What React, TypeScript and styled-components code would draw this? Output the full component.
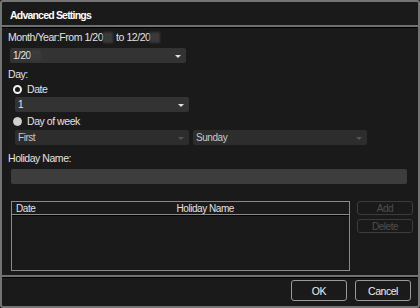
import styled, { createGlobalStyle } from 'styled-components';

const GlobalStyle = createGlobalStyle`
  html, body {
    margin: 0;
    padding: 0;
    background: #1a1a1a;
  }
  * {
    box-sizing: border-box;
  }
`;

const Dialog = styled.div`
  width: 420px;
  height: 308px;
  border: 2px solid #747474;
  border-radius: 3px;
  background: #1a1a1a;
  display: flex;
  flex-direction: column;
  font-family: 'Liberation Sans', Arial, sans-serif;
  font-size: 10.5px;
  letter-spacing: -0.45px;
  color: #e2e2e2;
  overflow: hidden;
`;

const TitleBar = styled.div`
  height: 23px;
  padding-left: 8px;
  display: flex;
  align-items: center;
  font-weight: bold;
  color: #ffffff;
  font-size: 10.5px;
  letter-spacing: -0.8px;
  padding-top: 3px;
`;

const Divider = styled.div`
  height: 3px;
  border-top: 2px solid #707070;
  border-bottom: 1px solid #000;
`;

const Body = styled.div`
  flex: 1;
  padding: 3px 5px 0 6px;
  display: flex;
  flex-direction: column;
`;

const Label = styled.div<{ $top?: number; $indent?: number }>`
  height: 12px;
  line-height: 12px;
  margin-top: ${(p) => p.$top ?? 0}px;
  margin-left: ${(p) => p.$indent ?? 0}px;
  white-space: nowrap;
`;

const Blur = styled.span`
  display: inline-block;
  width: 10px;
  height: 11px;
  vertical-align: -2px;
  background: #3a3a3a;
  filter: blur(1px);
  margin-right: 3px;
`;

const Select = styled.div<{ $width: number; $disabled?: boolean }>`
  width: ${(p) => p.$width}px;
  height: 15px;
  border-radius: 2px;
  background: ${(p) => (p.$disabled ? '#2d2d2d' : '#333333')};
  color: ${(p) => (p.$disabled ? '#c8c8c8' : '#e6e6e6')};
  display: flex;
  align-items: center;
  justify-content: space-between;
  padding: 0 5px 0 3px;
  font-size: 10px;
`;

const Arrow = styled.span<{ $disabled?: boolean }>`
  width: 0;
  height: 0;
  border-left: 3px solid transparent;
  border-right: 3px solid transparent;
  border-top: 3px solid ${(p) => (p.$disabled ? '#555' : '#e0e0e0')};
  margin-top: 1px;
`;

const Row = styled.div<{ $top?: number; $indent?: number; $gap?: number }>`
  display: flex;
  align-items: center;
  margin-top: ${(p) => p.$top ?? 0}px;
  margin-left: ${(p) => p.$indent ?? 0}px;
  gap: ${(p) => p.$gap ?? 0}px;
`;

const RadioRow = styled.label`
  display: flex;
  align-items: center;
  height: 12px;
  gap: 5px;
  margin-left: 5px;
`;

const Radio = styled.span<{ $checked?: boolean }>`
  width: 9px;
  height: 9px;
  border-radius: 50%;
  background: ${(p) => (p.$checked ? '#1a1a1a' : '#cfcfcf')};
  border: ${(p) => (p.$checked ? '2.5px solid #f0f0f0' : '1px solid #cfcfcf')};
`;

const TextInput = styled.div`
  margin-left: 3px;
  width: 396px;
  height: 15px;
  border-radius: 2px;
  background: #3d3d3d;
`;

const ListArea = styled.div`
  display: flex;
  margin-top: 17px;
  margin-left: 3px;
  gap: 7px;
`;

const Table = styled.div`
  flex-shrink: 0;
  width: 339px;
  height: 70px;
  border: 1px solid #8a8a8a;
  display: flex;
  flex-direction: column;
`;

const TableHead = styled.div`
  height: 13px;
  display: grid;
  grid-template-columns: 1fr 1fr;
  align-items: center;
  padding-left: 4px;
  border-bottom: 1px solid #8a8a8a;
  box-shadow: 0 1px 0 #000;
  font-size: 10px;
`;

const HeadCell = styled.span<{ $shift?: number }>`
  margin-left: ${(p) => p.$shift ?? 0}px;
`;

const SideButtons = styled.div`
  flex-shrink: 0;
  display: flex;
  flex-direction: column;
  gap: 4px;
`;

const SmallButton = styled.div`
  width: 56px;
  height: 14px;
  border: 1px solid #3c3c3c;
  border-radius: 3px;
  color: #4e4e4e;
  font-size: 10px;
  display: flex;
  align-items: center;
  justify-content: center;
`;

const Footer = styled.div`
  height: 28px;
  display: flex;
  justify-content: flex-end;
  align-items: flex-start;
  gap: 8px;
  padding: 2px 7px 0 0;
`;

const Button = styled.div`
  width: 56px;
  height: 21px;
  border: 1px solid #9a9a9a;
  border-radius: 3px;
  color: #f0f0f0;
  font-size: 10.5px;
  display: flex;
  align-items: center;
  justify-content: center;
`;

export default function App() {
  return (
    <>
      <GlobalStyle />
      <Dialog>
        <TitleBar>Advanced Settings</TitleBar>
        <Divider />
        <Body>
          <Label>
            Month/Year:From 1/20<Blur />to 12/20<Blur />
          </Label>
          <Row $top={5} $indent={2}>
            <Select $width={176}>
              <span>
                1/20<Blur />
              </span>
              <Arrow />
            </Select>
          </Row>
          <Label $top={5}>Day:</Label>
          <Row $top={3}>
            <RadioRow>
              <Radio $checked />
              Date
            </RadioRow>
          </Row>
          <Row $top={2} $indent={7}>
            <Select $width={174}>
              <span>1</span>
              <Arrow />
            </Select>
          </Row>
          <Row $top={3}>
            <RadioRow>
              <Radio />
              Day of week
            </RadioRow>
          </Row>
          <Row $top={3} $indent={7} $gap={4}>
            <Select $width={174} $disabled>
              <span>First</span>
              <Arrow $disabled />
            </Select>
            <Select $width={174} $disabled>
              <span>Sunday</span>
              <Arrow $disabled />
            </Select>
          </Row>
          <Label $top={7}>Holiday Name:</Label>
          <Row $top={5}>
            <TextInput />
          </Row>
          <ListArea>
            <Table>
              <TableHead>
                <HeadCell>Date</HeadCell>
                <HeadCell $shift={-6}>Holiday Name</HeadCell>
              </TableHead>
            </Table>
            <SideButtons>
              <SmallButton>Add</SmallButton>
              <SmallButton>Delete</SmallButton>
            </SideButtons>
          </ListArea>
        </Body>
        <Divider />
        <Footer>
          <Button>OK</Button>
          <Button>Cancel</Button>
        </Footer>
      </Dialog>
    </>
  );
}
